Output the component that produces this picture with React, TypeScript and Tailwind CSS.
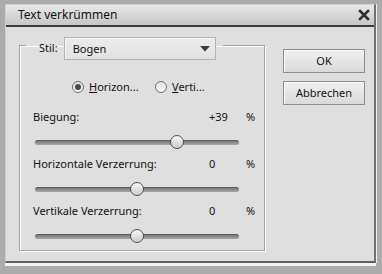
const font = { fontFamily: '"Noto Sans", "Open Sans", sans-serif' }

type SliderProps = { label: string; value: number }

function Slider({ label, value }: SliderProps) {
	const left = ((value + 100) / 200) * 204 - 7
	return (
		<>
			<div className="flex h-[16px] items-center text-[11px] leading-[16px] text-[#111]">
				<span className="flex-1">{label}</span>
				<span className="w-[37px]">{value > 0 ? `+${value}` : value}</span>
				<span className="w-[13px]">%</span>
			</div>
			<div className="relative ml-[2px] mt-[10px] mb-[7px] flex h-[14px] w-[204px] items-center">
				<div className="h-[5px] w-full rounded-full border-t border-[#5c5c5c] bg-gradient-to-b from-[#7a7a7a] to-[#a8a8a8]" />
				<div
					className="absolute top-0 h-[14px] w-[14px] rounded-full border border-[#4f4f4f] bg-gradient-to-b from-[#f6f6f6] to-[#cdcdcd]"
					style={{ left }}
				/>
			</div>
		</>
	)
}

function Radio({ checked, label, underline }: { checked?: boolean; label: string; underline: string }) {
	return (
		<div className="flex items-center">
			<span className="flex h-[12px] w-[12px] items-center justify-center rounded-full border border-[#6d6d6d] bg-gradient-to-b from-[#e4e4e4] to-[#fafafa]">
				{checked && <span className="h-[6px] w-[6px] rounded-full bg-[#4a4a4a]" />}
			</span>
			<span className="ml-[5px] text-[11px] leading-[16px] text-[#111]">
				<span className="underline">{underline}</span>
				{label}
			</span>
		</div>
	)
}

export default function App() {
	return (
		<div className="flex h-[274px] w-[382px] flex-col bg-[#ababab] pl-[5px] pr-[6px] pt-[4px] pb-[8px]" style={font}>
			<div className="flex flex-1 flex-col border-l border-t border-r-2 border-b-2 border-l-[#cfcfcf] border-t-[#cfcfcf] border-r-[#6f6f6f] border-b-[#5e5e5e] bg-[#dfdfdf] shadow-[1px_0_0_#f2f2f2]">
				<div className="flex h-[22px] items-center justify-between border-b-2 border-[#3a3a3a] bg-gradient-to-b from-[#e9e9e9] to-[#c6c6c6] pl-[12px] pr-[4px]">
					<span className="text-[12px] leading-[16px] text-[#111]">Text verkrümmen</span>
					<svg width="12" height="12" viewBox="0 0 12 12">
						<path d="M2 2 L10 10 M10 2 L2 10" stroke="#2e2e2e" strokeWidth="2.6" strokeLinecap="square" />
					</svg>
				</div>
				<div className="flex flex-1 items-start">
					<fieldset className="ml-[13px] mt-[10px] h-[214px] w-[246px] border border-[#a3a3a3] p-0 shadow-[1px_1px_0_#ffffff,inset_1px_1px_0_#ffffff]">
						<legend className="ml-[6px] h-[16px] pl-[13px] pr-[7px]">
							<div className="flex items-start">
								<span className="mt-[3px] text-[11px] leading-[16px] text-[#111]">Stil:</span>
								<div className="ml-[6px] flex h-[23px] w-[152px] items-center justify-between border border-[#b3b3b3] bg-gradient-to-b from-[#ececec] to-[#e2e2e2] pl-[8px] pr-[5px] shadow-[inset_1px_1px_0_#f8f8f8]">
									<span className="text-[11px] leading-[16px] text-[#111]">Bogen</span>
									<svg width="10" height="6" viewBox="0 0 10 6">
										<path d="M0 0 H10 L5 5.5 Z" fill="#3c3c3c" />
									</svg>
								</div>
							</div>
						</legend>
						<div className="flex flex-col pl-[13px] pr-[5px] pt-[25px]">
							<div className="ml-[39px] flex h-[17px] items-center">
								<div className="w-[83px]">
									<Radio checked underline="H" label="orizon..." />
								</div>
								<Radio underline="V" label="erti..." />
							</div>
							<div className="mt-[14px]">
								<Slider label="Biegung:" value={39} />
								<Slider label="Horizontale Verzerrung:" value={0} />
								<Slider label="Vertikale Verzerrung:" value={0} />
							</div>
						</div>
					</fieldset>
					<div className="ml-[18px] mt-[22px] flex flex-col gap-[8px]">
						{['OK', 'Abbrechen'].map((t) => (
							<button
								key={t}
								className="h-[24px] w-[82px] border border-[#8d8d8d] bg-gradient-to-b from-[#f0f0f0] to-[#dadada] text-[11px] leading-[16px] text-[#111] shadow-[inset_1px_1px_0_#fafafa]"
							>
								{t}
							</button>
						))}
					</div>
				</div>
			</div>
			<div className="h-[3px] bg-[#f3f3f3]" />
		</div>
	)
}
